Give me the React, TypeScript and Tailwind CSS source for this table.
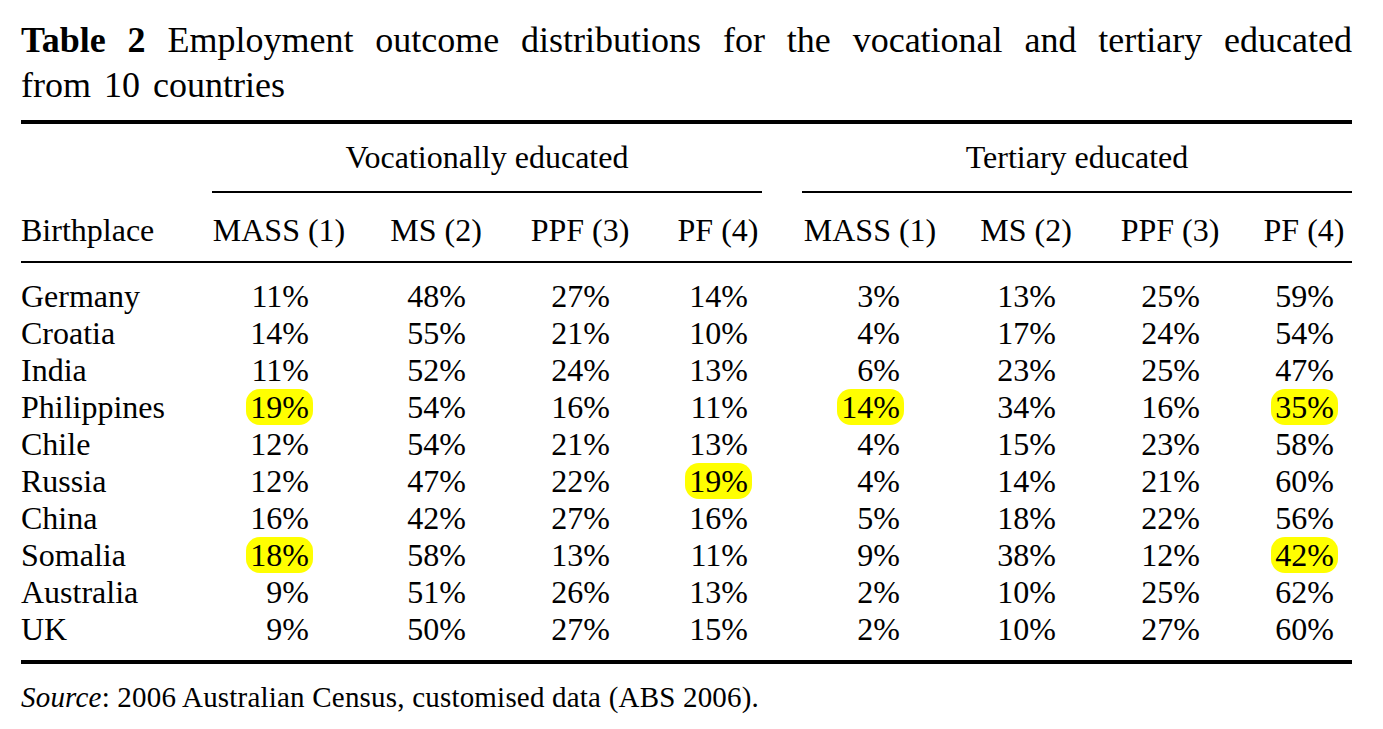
import React from "react"

type Cell = { v: string; hl?: boolean }

interface RowData {
    place: string
    voc: Cell[]
    ter: Cell[]
}

const c = (v: string, hl = false): Cell => ({ v, hl })

const rows: RowData[] = [
    { place: "Germany", voc: [c("11%"), c("48%"), c("27%"), c("14%")], ter: [c("3%"), c("13%"), c("25%"), c("59%")] },
    { place: "Croatia", voc: [c("14%"), c("55%"), c("21%"), c("10%")], ter: [c("4%"), c("17%"), c("24%"), c("54%")] },
    { place: "India", voc: [c("11%"), c("52%"), c("24%"), c("13%")], ter: [c("6%"), c("23%"), c("25%"), c("47%")] },
    { place: "Philippines", voc: [c("19%", true), c("54%"), c("16%"), c("11%")], ter: [c("14%", true), c("34%"), c("16%"), c("35%", true)] },
    { place: "Chile", voc: [c("12%"), c("54%"), c("21%"), c("13%")], ter: [c("4%"), c("15%"), c("23%"), c("58%")] },
    { place: "Russia", voc: [c("12%"), c("47%"), c("22%"), c("19%", true)], ter: [c("4%"), c("14%"), c("21%"), c("60%")] },
    { place: "China", voc: [c("16%"), c("42%"), c("27%"), c("16%")], ter: [c("5%"), c("18%"), c("22%"), c("56%")] },
    { place: "Somalia", voc: [c("18%", true), c("58%"), c("13%"), c("11%")], ter: [c("9%"), c("38%"), c("12%"), c("42%", true)] },
    { place: "Australia", voc: [c("9%"), c("51%"), c("26%"), c("13%")], ter: [c("2%"), c("10%"), c("25%"), c("62%")] },
    { place: "UK", voc: [c("9%"), c("50%"), c("27%"), c("15%")], ter: [c("2%"), c("10%"), c("27%"), c("60%")] },
]

const grid = "grid grid-cols-[191px_134px_180px_108px_128px_40px_136px_176px_112px_126px]"

// per-column alignment classes, same order for voc and ter groups
const vocCls = ["text-center", "text-center", "text-center", "text-center pl-[40px]"]
const terCls = ["text-center", "text-center", "text-center", "text-center pl-[30px]"]

const headers = ["MASS (1)", "MS (2)", "PPF (3)", "PF (4)"]

const Num = ({ cell }: { cell: Cell }) => (
    <span className="inline-block w-[60px] text-right">
        {cell.hl ? <span className="bg-[#ffff00] rounded-[14px] -mx-[4px] px-[4px]">{cell.v}</span> : cell.v}
    </span>
)

export default function App() {
    return (
        <div className="min-h-[729px] bg-white text-black font-['Liberation_Serif',serif] pl-[21px] pr-[31px] pt-[18px]">
            <div className="text-[36px] leading-[45px]">
                <p className="text-justify [text-align-last:justify]">
                    <span className="font-bold">Table 2</span> Employment outcome distributions for the vocational and tertiary educated
                </p>
                <p className="[word-spacing:4px]">from 10 countries</p>
            </div>

            <div className="mt-[12px] border-t-[4px] border-black text-[32px]">
                <div className={`${grid} pt-[13px] leading-[40px]`}>
                    <div />
                    <div className="col-span-4 text-center border-b-2 border-black pb-[14px]">Vocationally educated</div>
                    <div />
                    <div className="col-span-4 text-center border-b-2 border-black pb-[14px]">Tertiary educated</div>
                </div>

                <div className={`${grid} pt-[17px] pb-[11px] leading-[40px] border-b-2 border-black`}>
                    <div>Birthplace</div>
                    {headers.map((h, i) => (
                        <div key={"v" + i} className={vocCls[i]}>{h}</div>
                    ))}
                    <div />
                    {headers.map((h, i) => (
                        <div key={"t" + i} className={terCls[i]}>{h}</div>
                    ))}
                </div>

                <div className="pt-[15px] pb-[12px] border-b-[4px] border-black">
                    {rows.map((r) => (
                        <div key={r.place} className={`${grid} leading-[37px]`}>
                            <div>{r.place}</div>
                            {r.voc.map((cell, i) => (
                                <div key={"v" + i} className={vocCls[i]}>
                                    <Num cell={cell} />
                                </div>
                            ))}
                            <div />
                            {r.ter.map((cell, i) => (
                                <div key={"t" + i} className={terCls[i]}>
                                    <Num cell={cell} />
                                </div>
                            ))}
                        </div>
                    ))}
                </div>
            </div>

            <p className="mt-[17px] text-[29px] leading-[32px] tracking-[0.2px]">
                <i>Source</i>: 2006 Australian Census, customised data (ABS 2006).
            </p>
        </div>
    )
}
